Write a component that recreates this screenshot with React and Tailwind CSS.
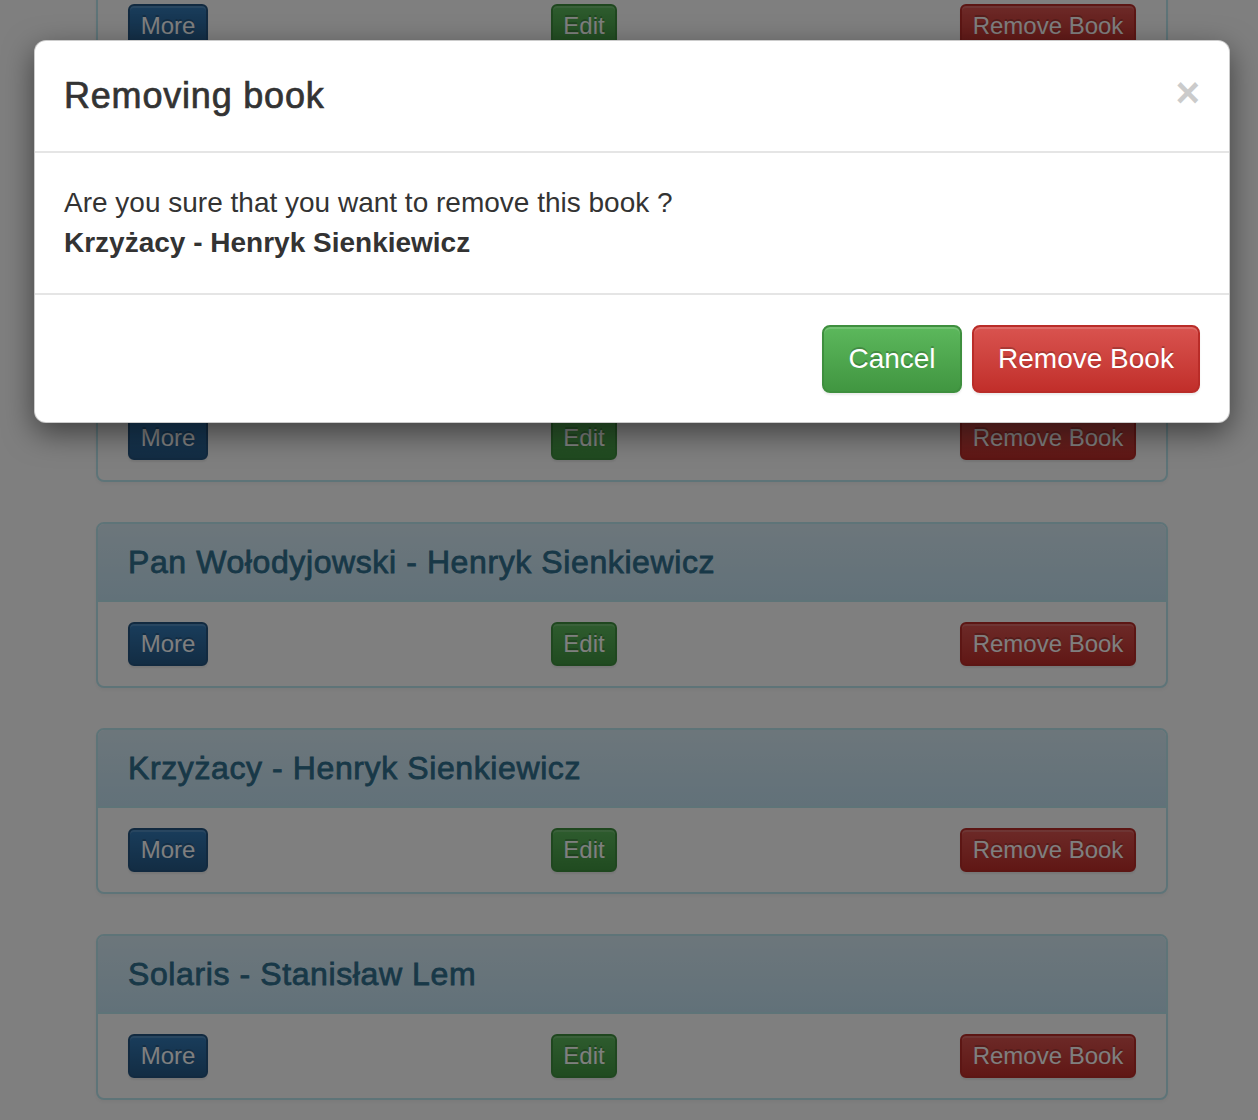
import React from "react";

const books = [
  "Ogniem i mieczem - Henryk Sienkiewicz",
  "Potop - Henryk Sienkiewicz",
  "Quo vadis - Henryk Sienkiewicz",
  "Pan Wołodyjowski - Henryk Sienkiewicz",
  "Krzyżacy - Henryk Sienkiewicz",
  "Solaris - Stanisław Lem",
];

const xsBase =
  "h-[44px] rounded-[6px] border-2 text-[24px] leading-[36px] text-white flex items-center justify-center [text-shadow:0_-2px_0_rgba(0,0,0,0.2)] shadow-[inset_0_2px_0_rgba(255,255,255,0.15),0_2px_2px_rgba(0,0,0,0.075)]";

function Panel({ title }) {
  return (
    <div className="mb-[40px] rounded-[8px] border-2 border-[#bce8f1] bg-white shadow-[0_2px_4px_rgba(0,0,0,0.05)] overflow-hidden">
      <div className="h-[78px] border-b-2 border-[#bce8f1] bg-gradient-to-b from-[#d9edf7] to-[#c4e3f3] px-[30px] flex items-center">
        <h3 className="text-[32px] leading-[35px] tracking-[0.6px] text-[#31708f] whitespace-nowrap [-webkit-text-stroke:0.8px_#31708f]">{title}</h3>
      </div>
      <div className="px-[30px] py-[20px] flex items-center justify-between">
        <button className={`${xsBase} w-[80px] border-[#245580] bg-gradient-to-b from-[#337ab7] to-[#265a88]`}>More</button>
        <button className={`${xsBase} w-[66px] border-[#3e8f3e] bg-gradient-to-b from-[#5cb85c] to-[#419641]`}>Edit</button>
        <button className={`${xsBase} w-[176px] border-[#b92c28] bg-gradient-to-b from-[#d9534f] to-[#c12e2a]`}>Remove Book</button>
      </div>
    </div>
  );
}

export default function App() {
  return (
    <div
      className="relative h-[1120px] w-full overflow-hidden bg-white text-[#333]"
      style={{ fontFamily: '"Liberation Sans", Arial, Helvetica, sans-serif' }}
    >
      <div className="ml-[96px] w-[1072px] mt-[-96px]">
        {books.map((b) => (
          <Panel key={b} title={b} />
        ))}
      </div>

      <div className="absolute inset-0 bg-black/50" />

      <div className="absolute left-[34px] top-[40px] w-[1196px] rounded-[12px] border border-black/20 bg-white shadow-[0_10px_30px_rgba(0,0,0,0.5)]">
        <div className="flex items-start justify-between border-b-2 border-[#e5e5e5] px-[29px] pt-[29px] pb-[29px]">
          <h4 className="text-[36px] leading-[52px] tracking-[0.8px] text-[#333] [-webkit-text-stroke:0.7px_#333]">Removing book</h4>
          <button className="mt-[2px] text-[42px] font-bold leading-none text-black opacity-20">×</button>
        </div>
        <div className="px-[29px] pt-[30px] pb-[30px] text-[28px] leading-[40px]">
          <p>Are you sure that you want to remove this book ?</p>
          <p className="font-bold">Krzyżacy - Henryk Sienkiewicz</p>
        </div>
        <div className="flex justify-end gap-[10px] border-t-2 border-[#e5e5e5] px-[29px] pt-[30px] pb-[29px]">
          <button className="flex h-[68px] w-[140px] items-center justify-center rounded-[8px] border-2 border-[#3e8f3e] bg-gradient-to-b from-[#5cb85c] to-[#419641] text-[28px] leading-[40px] text-white [text-shadow:0_-2px_0_rgba(0,0,0,0.2)] shadow-[inset_0_2px_0_rgba(255,255,255,0.15),0_2px_2px_rgba(0,0,0,0.075)]">
            Cancel
          </button>
          <button className="flex h-[68px] w-[228px] items-center justify-center rounded-[8px] border-2 border-[#b92c28] bg-gradient-to-b from-[#d9534f] to-[#c12e2a] text-[28px] leading-[40px] text-white [text-shadow:0_-2px_0_rgba(0,0,0,0.2)] shadow-[inset_0_2px_0_rgba(255,255,255,0.15),0_2px_2px_rgba(0,0,0,0.075)]">
            Remove Book
          </button>
        </div>
      </div>
    </div>
  );
}
